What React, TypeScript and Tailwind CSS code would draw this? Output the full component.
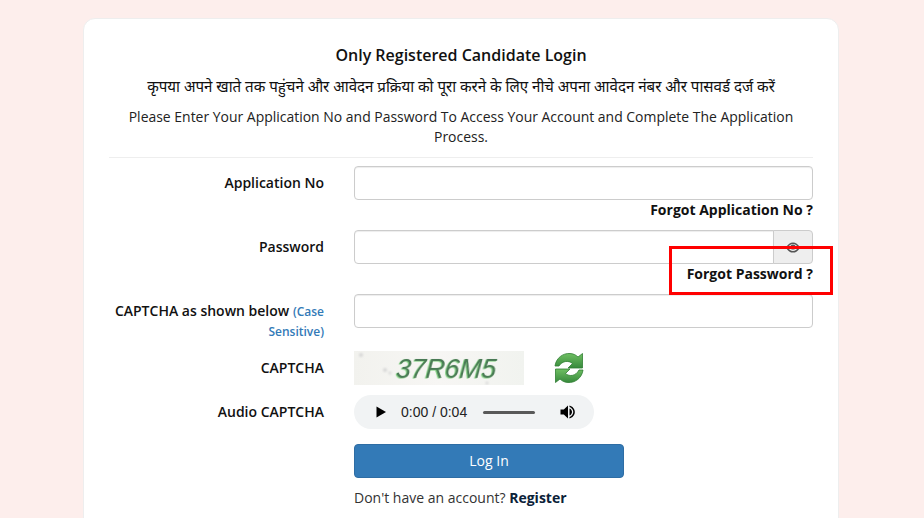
import React from "react";

const font = { fontFamily: '"Open Sans", "Noto Sans", sans-serif' };

function Row({ label, children, className = "" }: { label: React.ReactNode; children: React.ReactNode; className?: string }) {
  return (
    <div className={`flex ${className}`}>
      <div className="w-[215px] shrink-0 text-right text-[14px] leading-[20px] font-semibold text-[#111] pt-[7px]">{label}</div>
      <div className="ml-[30px] w-[459px] shrink-0">{children}</div>
    </div>
  );
}

const inputCls = "block w-full h-[34px] rounded-[4px] border border-[#ccc] bg-white shadow-[inset_0_1px_1px_rgba(0,0,0,0.075)] outline-none";

function Captcha() {
  return (
    <svg width="170" height="34" viewBox="0 0 170 34" className="block shrink-0">
      <defs>
        <linearGradient id="cbg" x1="0" y1="0" x2="1" y2="0">
          <stop offset="0" stopColor="#f2f2ee" />
          <stop offset="0.5" stopColor="#f7f6f4" />
          <stop offset="1" stopColor="#f1f3ef" />
        </linearGradient>
        <filter id="soft" x="-5%" y="-20%" width="110%" height="140%">
          <feDropShadow dx="-1" dy="0.6" stdDeviation="0.5" floodColor="#7fcf7f" />
          <feGaussianBlur stdDeviation="0.25" />
        </filter>
        <filter id="dots"><feGaussianBlur stdDeviation="1.2" /></filter>
      </defs>
      <rect width="170" height="34" fill="url(#cbg)" />
      <g filter="url(#dots)" fill="#d6d6d6">
        <circle cx="7" cy="4" r="2" />
        <circle cx="31" cy="19" r="2" />
        <circle cx="36" cy="22" r="1.500" />
        <circle cx="133" cy="32" r="1.500" />
      </g>
      <text x="42" y="27" fontSize="27" fontStyle="italic" textLength="100" lengthAdjust="spacingAndGlyphs" fill="#4a7a55" filter="url(#soft)" transform="skewX(-5) translate(2 0)" style={{ fontFamily: '"Liberation Sans", sans-serif' }}>37R6M5</text>
    </svg>
  );
}

export default function App() {
  return (
    <div className="relative h-[518px] w-[924px] overflow-hidden bg-[#fdeeec]" style={font}>
      <div className="ml-[83px] mt-[18px] h-[560px] w-[756px] rounded-[12px] border border-[#eee] bg-white px-[25px] pt-[25px]">
        <h2 className="text-center text-[16px] leading-[22px] font-semibold text-[#111]">Only Registered Candidate Login</h2>
        <p className="mt-[9px] text-center text-[15.1px] leading-[22px] text-[#111]">कृपया अपने खाते तक पहुंचने और आवेदन प्रक्रिया को पूरा करने के लिए नीचे अपना आवेदन नंबर और पासवर्ड दर्ज करें</p>
        <p className="mt-[10px] px-[10px] text-center text-[13.96px] leading-[20px] text-[#222]">Please Enter Your Application No and Password To Access Your Account and Complete The Application Process.</p>
        <div className="mt-[10px] border-t border-[#eee]" />

        <Row label="Application No" className="mt-[8px]">
          <input className={inputCls} />
          <div className="h-[30px] text-right text-[14px] leading-[20px] font-bold text-[#111]">Forgot Application No ?</div>
        </Row>

        <Row label="Password">
          <div className="flex h-[34px]">
            <input className="block h-[34px] min-w-0 flex-1 rounded-l-[4px] border border-[#ccc] bg-white shadow-[inset_0_1px_1px_rgba(0,0,0,0.075)] outline-none" />
            <div className="-ml-px flex h-[34px] w-[40px] items-center justify-center rounded-r-[4px] border border-[#ccc] bg-[#eee]">
              <svg width="14" height="11" viewBox="0 0 14 11" className="text-[#555]">
                <path d="M0.8 5.500C2.500 2.600 4.600 1.200 7 1.200s4.500 1.400 6.200 4.300C11.500 8.400 9.400 9.800 7 9.800S2.500 8.400 0.800 5.500z" fill="none" stroke="currentColor" strokeWidth="1.500" />
                <circle cx="7" cy="5" r="2.600" fill="currentColor" />
              </svg>
            </div>
          </div>
          <div className="h-[30px] text-right text-[14px] leading-[20px] font-bold text-[#111]">Forgot Password ?</div>
        </Row>

        <Row label={<div className="h-[42px] leading-[20px]">CAPTCHA as shown below <span className="text-[12px] leading-[16px] text-[#337ab7]">(Case Sensitive)</span></div>}>
          <input className={inputCls} />
        </Row>

        <Row label="CAPTCHA" className="mt-[8px] h-[34px]">
          <div className="flex items-center">
            <Captcha />
            <svg width="32" height="32" viewBox="0 0 32 32" className="ml-[29px]">
              <defs>
                <linearGradient id="rg" x1="0" y1="0" x2="0" y2="1">
                  <stop offset="0" stopColor="#6fbf62" />
                  <stop offset="1" stopColor="#37893c" />
                </linearGradient>
              </defs>
              <path d="M2 14C3 6 10 1 17 1.500c3.500.2 6 1.500 8 3.500l4.500-3.500V16H15l4.500-4.500C15.500 8 9 9 6 14z" fill="url(#rg)" stroke="#2f7d32" strokeWidth="0.8" />
              <path d="M30 18c-1 8-8 13-15 12.500-3.500-.2-6-1.500-8-3.500L2.500 30.500V17H17l-4.500 4.500c4 3.500 10.500 2.500 13.500-3.500z" fill="url(#rg)" stroke="#2f7d32" strokeWidth="0.8" />
            </svg>
          </div>
        </Row>

        <Row label="Audio CAPTCHA" className="mt-[10px] h-[34px]">
          <div className="flex h-[34px] w-[240px] items-center rounded-full bg-[#f1f3f4] text-[#111]">
            <svg width="12" height="12" viewBox="0 0 12 12" className="ml-[21px]"><path d="M1.500 0.500v11l9.500-5.500z" fill="#000" /></svg>
            <span className="ml-[14px] text-[14px] leading-[20px] text-[#222]" style={{ fontFamily: '"Liberation Sans", sans-serif' }}>0:00 / 0:04</span>
            <div className="ml-[16px] h-[3px] w-[52px] rounded-full bg-[#595959]" />
            <svg width="18" height="18" viewBox="0 0 18 18" className="ml-[24px]">
              <path d="M1.500 6.500v5h3.300L9 15.500v-13L4.800 6.500z" fill="#000" />
              <path d="M10.500 5.500v7c1.600-.6 2.500-2 2.500-3.500s-.9-2.900-2.500-3.500z" fill="#000" />
              <path d="M10.500 2.500v1.600c2.200.7 3.800 2.700 3.800 4.900s-1.600 4.200-3.800 4.900v1.600c3-.8 5.300-3.400 5.300-6.500s-2.300-5.700-5.300-6.500z" fill="#000" />
            </svg>
          </div>
        </Row>

        <div className="ml-[245px] mt-[15px] w-[270px]">
          <button className="block h-[34px] w-full rounded-[4px] border border-[#2e6da4] bg-[#337ab7] pb-[2px] text-[14px] text-white">Log In</button>
        </div>
        <p className="ml-[245px] mt-[10px] text-[14px] leading-[20px] text-[#333]">Don't have an account? <span className="font-bold text-[#0b2239]">Register</span></p>
      </div>
      <div className="absolute left-[669px] top-[246px] h-[49px] w-[164px] border-[3px] border-[#ff0000]" />
    </div>
  );
}
